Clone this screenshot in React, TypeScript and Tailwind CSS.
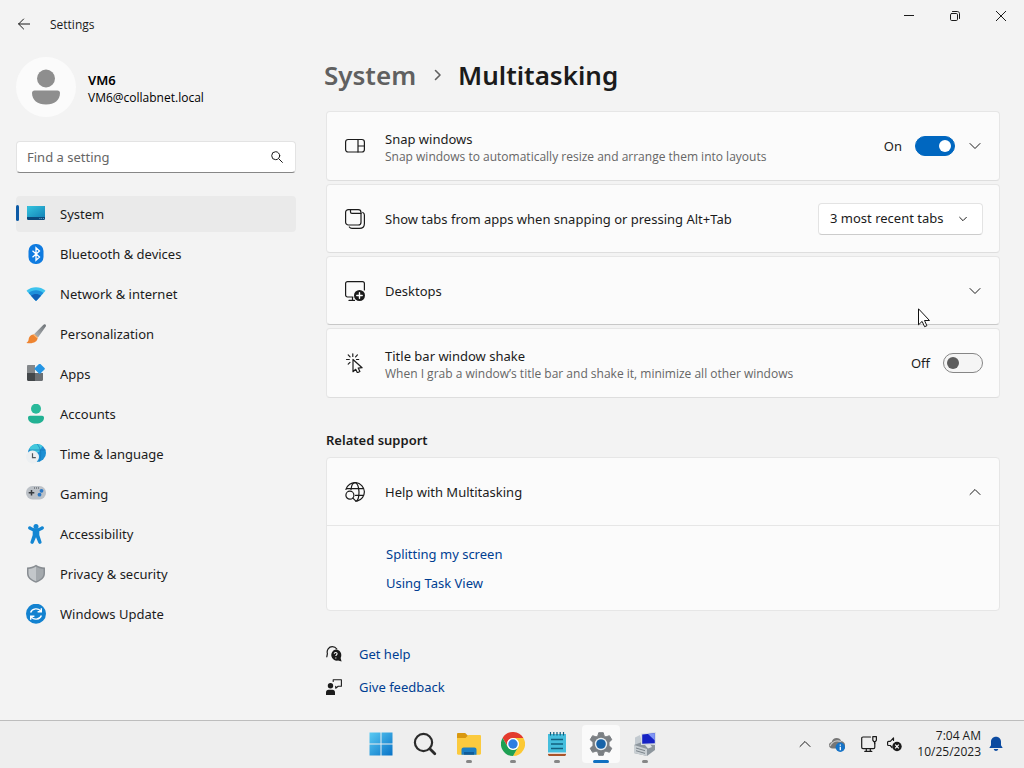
import { useState } from "react";
import type { ReactNode } from "react";

const stroke = {
  fill: "none",
  stroke: "#1b1b1b",
  strokeWidth: 1.2,
  strokeLinecap: "round" as const,
  strokeLinejoin: "round" as const,
};

function Chevron({ up = false, size = 12 }: { up?: boolean; size?: number }) {
  return (
    <svg width={size} height={size} viewBox="0 0 12 12" {...stroke} strokeWidth={12 / size}>
      <path d={up ? "M1 8.5l5-5 5 5" : "M1 3.5l5 5 5-5"} />
    </svg>
  );
}

/* ---------- sidebar icons ---------- */

function SystemIcon() {
  return (
    <svg width="20" height="20" viewBox="0 0 20 20">
      <defs>
        <linearGradient id="sys" x1="0" y1="0" x2="1" y2="1">
          <stop offset="0" stopColor="#34c5df" />
          <stop offset="1" stopColor="#1484b8" />
        </linearGradient>
      </defs>
      <rect x="1" y="2" width="18" height="14" rx="1.2" fill="#0b4a7d" />
      <path d="M2.2 2h15.6c.7 0 1.2.5 1.2 1.2V13H1V3.200C1 2.500 1.500 2 2.200 2z" fill="url(#sys)" />
      <path d="M13.500 14.500h.8M15.300 14.500h.8M17.100 14.500h.8" stroke="#8fd0ee" strokeWidth=".8" />
    </svg>
  );
}

function BluetoothIcon() {
  return (
    <svg width="20" height="20" viewBox="0 0 20 20">
      <rect x="2.5" width="15" height="20" rx="7" fill="#0f7be0" />
      <path d="M6.500 6.800l7 6.200-3.500 3.200V3.800l3.500 3.200-7 6.200" fill="none" stroke="#fff" strokeWidth="1.3" />
    </svg>
  );
}

function NetworkIcon() {
  return (
    <svg width="20" height="20" viewBox="0 0 20 20">
      <path d="M.5 6.800C6 2.200 14 2.200 19.500 6.800L10.800 16.300c-.5.500-1.100.5-1.600 0z" fill="#3cc3ee" />
      <path d="M2.600 9c4.200-3.600 10.600-3.600 14.800 0l-6.600 7.300c-.5.500-1.100.5-1.600 0z" fill="#1d8fdb" />
      <path d="M5 11.700c2.800-2.400 7.200-2.400 10 0l-4.200 4.600c-.5.500-1.100.5-1.600 0z" fill="#1160b7" />
    </svg>
  );
}

function PersonalizationIcon() {
  return (
    <svg width="20" height="20" viewBox="0 0 20 20">
      <defs>
        <linearGradient id="brush" x1="1" y1="0" x2="0" y2="1">
          <stop offset="0" stopColor="#6c7175" />
          <stop offset="1" stopColor="#b4b8bb" />
        </linearGradient>
      </defs>
      <path d="M19.400.5c.9.800.6 1.700 0 2.600L12 13.600 8 10.200 17.200 1c.7-.7 1.500-1 2.200-.5z" fill="url(#brush)" />
      <path d="M7.600 10.400c1.900.1 3.900 1.900 4 3.900-.4 3.700-4.800 5.900-11.200 4.600 2.300-1.200 2-2.500 2.500-4.800.6-2.300 2.500-3.700 4.700-3.700z" fill="#ee8430" />
      <path d="M7.900 10.100l4 3.500-.6 1-4.300-3.800z" fill="#f8bb7c" />
    </svg>
  );
}

function AppsIcon() {
  return (
    <svg width="20" height="20" viewBox="0 0 20 20">
      <path d="M1 2.200C1 1.500 1.500 1 2.200 1H9v8H1z" fill="#83878a" />
      <path d="M1 9h8v8H2.200C1.500 17 1 16.500 1 15.800z" fill="#43474a" />
      <path d="M9 9h8v6.800c0 .7-.5 1.200-1.200 1.200H9z" fill="#6b6f73" />
      <rect x="9.800" y=".9" width="7.800" height="7.800" rx="1" transform="rotate(45 13.7 4.8)" fill="#2495e4" />
    </svg>
  );
}

function AccountsIcon() {
  return (
    <svg width="20" height="20" viewBox="0 0 20 20">
      <circle cx="10" cy="4.700" r="5" fill="#29b99a" />
      <path d="M4 11.800h12c1.200 0 2 .8 2 1.900 0 3.900-3.400 5.800-8 5.800s-8-1.900-8-5.800c0-1.100.8-1.900 2-1.900z" fill="#22b193" />
    </svg>
  );
}

function TimeIcon() {
  return (
    <svg width="20" height="20" viewBox="0 0 20 20">
      <circle cx="11" cy="9" r="9" fill="#1d8fd3" />
      <path d="M3 5.200A9 9 0 0111 0c3 0 4.500 1 5.500 2L13 8 6 9z" fill="#43c8dc" />
      <path d="M11 0c4 4 5 11 2 18M3 6h16.500" stroke="#1173b5" strokeWidth=".6" fill="none" />
      <circle cx="6.500" cy="13" r="6.500" fill="#eceff1" />
      <path d="M6.500 9.300v4.400h3.300" stroke="#50565b" strokeWidth="1.2" fill="none" />
    </svg>
  );
}

function GamingIcon() {
  return (
    <svg width="20" height="20" viewBox="0 0 20 20">
      <rect y="2" width="20" height="13.500" rx="6.500" fill="#bcc1c7" />
      <path d="M5.500 6v5.600M2.700 8.800h5.600" stroke="#373b3f" strokeWidth="1.5" />
      <circle cx="15.500" cy="6.800" r="1.900" fill="#2b78c5" />
      <circle cx="13.500" cy="10.700" r="1.900" fill="#2b78c5" />
      <path d="M8 4h1M10 4h1M12 4h1" stroke="#44484c" />
    </svg>
  );
}

function AccessibilityIcon() {
  return (
    <svg width="20" height="20" viewBox="0 0 20 20" fill="#1386d3">
      <circle cx="10" cy="2.500" r="2.500" />
      <path d="M2.200 3.200c.5-1 1.500-1.300 2.400-.7 3.300 2.500 7.500 2.500 10.800 0 .9-.6 1.900-.3 2.400.7.400.9.100 1.700-.8 2.200L13.300 7.300v3.600l2.200 6.800c.3 1-.2 1.800-1.100 2.100-1 .3-1.800-.1-2.100-1L10 13.200l-2.300 5.600c-.3.900-1.100 1.300-2.100 1-.9-.3-1.400-1.100-1.100-2.100l2.200-6.800V7.300L3 5.400c-.9-.5-1.200-1.300-.8-2.200z" />
    </svg>
  );
}

function PrivacyIcon() {
  return (
    <svg width="20" height="20" viewBox="0 0 20 20">
      <path d="M10 .8c2.900 2 5.500 2.700 9 2.800v5.600c0 4.600-3.500 7.400-9 9.500C4.500 16.600 1 13.800 1 9.200V3.600C4.500 3.500 7.100 2.800 10 .8z" fill="#888d92" />
      <path d="M10 2.500c2.300 1.500 4.700 2.200 7.500 2.400v4.300c0 3.700-2.700 6.100-7.500 8z" fill="#a4a9ad" />
      <path d="M10 2.500C7.700 4 5.300 4.700 2.500 4.900v4.300c0 3.700 2.700 6.100 7.500 8z" fill="#c3c7ca" />
    </svg>
  );
}

function UpdateIcon() {
  return (
    <svg width="20" height="20" viewBox="0 0 20 20">
      <circle cx="10" cy="9.700" r="10" fill="#1382d0" />
      <path d="M4.600 8.500C6 4.300 12.500 3.400 15 7.500M15.300 4.200v3.600h-3.700M15.400 11.500C14 15.700 7.500 16.600 5 12.500M4.700 15.800v-3.600h3.700" fill="none" stroke="#fff" strokeWidth="1.4" />
    </svg>
  );
}

const navItems = [
  { label: "System", icon: <SystemIcon /> },
  { label: "Bluetooth & devices", icon: <BluetoothIcon /> },
  { label: "Network & internet", icon: <NetworkIcon /> },
  { label: "Personalization", icon: <PersonalizationIcon /> },
  { label: "Apps", icon: <AppsIcon /> },
  { label: "Accounts", icon: <AccountsIcon /> },
  { label: "Time & language", icon: <TimeIcon /> },
  { label: "Gaming", icon: <GamingIcon /> },
  { label: "Accessibility", icon: <AccessibilityIcon /> },
  { label: "Privacy & security", icon: <PrivacyIcon /> },
  { label: "Windows Update", icon: <UpdateIcon /> },
];

/* ---------- setting card icons ---------- */

function SnapIcon() {
  return (
    <svg width="20" height="20" viewBox="0 0 20 20" {...stroke}>
      <rect x=".6" y="3.500" width="18.800" height="12.500" rx="2.500" />
      <path d="M13 3.500v12.500M13 10h6.400" />
    </svg>
  );
}

function TabsIcon() {
  return (
    <svg width="20" height="20" viewBox="0 0 20 20" {...stroke}>
      <rect x=".6" y=".6" width="15.400" height="15.400" rx="2.800" />
      <path d="M5.500.6v2.400c0 .9.500 1.400 1.400 1.400H16M17.800 3.500c1 .5 1.600 1.400 1.600 2.500v8.400c0 3-2 5-5 5H7c-1.200 0-2.100-.5-2.700-1.400" />
    </svg>
  );
}

function DesktopsIcon() {
  return (
    <svg width="20" height="20" viewBox="0 0 20 20" {...stroke}>
      <path d="M8 16H2.600c-1.200 0-2-.8-2-2V2.600c0-1.200.8-2 2-2h14.800c1.200 0 2 .8 2 2V9M7.500 16v3.400M4 19.400h5.500" />
      <circle cx="14.500" cy="14.500" r="5.500" fill="#1b1b1b" stroke="none" />
      <path d="M14.500 11.800v5.400M11.800 14.500h5.400" stroke="#fff" strokeWidth="1.4" />
    </svg>
  );
}

function ShakeIcon() {
  return (
    <svg width="20" height="20" viewBox="0 0 20 20" {...stroke}>
      <path d="M8 6.500v12.200l2.700-2.400 1.700 3.400 2.500-1.200-1.700-3.400 3.900-.4z" />
      <path d="M7.800.8v2.600M1.500 6.500h2.800M3.200 1.900l1.900 1.900M12.400 1.900l-1.800 1.900M3.200 11.200L5 9.400M11.500 6.500h2.200" />
    </svg>
  );
}

function WebSearchIcon() {
  return (
    <svg width="20" height="20" viewBox="0 0 20 20" {...stroke}>
      <path d="M.9 7.500A9.400 9.400 0 1112 19.200M1.600 6.600h16.800M10.500 13.400h7.900" />
      <path d="M6 7.500C6.500 3.400 8 .6 10 .6s4 3.900 4 9.400-1.200 8.600-3 9.300" />
      <circle cx="4.900" cy="13.200" r="4" />
      <path d="M7.900 16.200l3 3" />
    </svg>
  );
}

function HelpIcon() {
  return (
    <svg width="16" height="16" viewBox="0 0 16 16">
      <path d="M.8 10.800l.6-3.200C.4 4 2.800.7 6.300.7c2 0 3.500.8 4.500 2.300" {...stroke} />
      <path d="M9.700 3.600a5.600 5.600 0 014.900 8.300l1 3.600-3.500-.9A5.600 5.600 0 119.700 3.600z" fill="#1b1b1b" />
      <path d="M8.200 7.700c.2-1.800 3-1.600 2.900.1 0 1-1.300 1.200-1.300 2.300M9.800 11.500v1" fill="none" stroke="#fff" strokeWidth="1.1" />
    </svg>
  );
}

function FeedbackIcon() {
  return (
    <svg width="16" height="16" viewBox="0 0 16 16">
      <path d="M7.200 2.500V.7h8.200v6.500h-3.200l-2.500 2V7.200" {...stroke} strokeWidth="1.1" />
      <circle cx="4.500" cy="6.800" r="2.700" fill="#1b1b1b" />
      <path d="M0 16v-2.800c0-1.500 1-2.500 2.500-2.500h4c1.500 0 2.500 1 2.500 2.500V16z" fill="#1b1b1b" />
    </svg>
  );
}

/* ---------- taskbar icons ---------- */

function StartIcon() {
  return (
    <svg width="24" height="24" viewBox="0 0 24 24">
      <defs>
        <linearGradient id="start" x1="0" y1="0" x2="24" y2="24" gradientUnits="userSpaceOnUse">
          <stop offset="0" stopColor="#5ccdf4" />
          <stop offset="1" stopColor="#0670c6" />
        </linearGradient>
      </defs>
      <path d="M.5.5h11v11H.5zM12.500.5h11v11h-11zM.5 12.500h11v11H.5zM12.500 12.500h11v11h-11z" fill="url(#start)" />
    </svg>
  );
}

function SearchTaskIcon() {
  return (
    <svg width="24" height="24" viewBox="0 0 24 24" fill="none" stroke="#2b2b2b">
      <circle cx="10.500" cy="10.500" r="8.600" strokeWidth="2.2" />
      <path d="M16.800 16.800l5 5" strokeWidth="2.800" strokeLinecap="round" />
    </svg>
  );
}

function ExplorerIcon() {
  return (
    <svg width="24" height="24" viewBox="0 0 24 24">
      <path d="M0 2.200C0 1.500.5 1 1.200 1h7l3 3v4H0z" fill="#d9980f" />
      <path d="M0 6h8.500l3-3h11.300c.7 0 1.200.5 1.200 1.200v17.300c0 .7-.5 1.200-1.200 1.200H1.200C.5 22.700 0 22.200 0 21.500z" fill="#fbca3e" />
      <path d="M4.500 22.700v-5c0-1.300.9-2.200 2.200-2.200h10.600c1.300 0 2.200.9 2.200 2.200v5z" fill="#1c7fc4" />
      <path d="M7 22.700v-2.700h10v2.700z" fill="#105c99" />
    </svg>
  );
}

function ChromeIcon() {
  return (
    <svg width="24" height="24" viewBox="0 0 24 24">
      <path d="M1.600 6a12 12 0 0120.800 0H12a6 6 0 00-5.200 9z" fill="#e33b2e" />
      <path d="M22.400 6A12 12 0 0112 24l5.200-9A6 6 0 0012 6z" fill="#fcc934" />
      <path d="M12 24A12 12 0 011.600 6l5.200 9a6 6 0 0010.400 0z" fill="#1fa053" />
      <circle cx="12" cy="12" r="5.900" fill="#fff" />
      <circle cx="12" cy="12" r="4.700" fill="#2f7de1" />
    </svg>
  );
}

function NotepadIcon() {
  return (
    <svg width="24" height="24" viewBox="0 0 24 24">
      <path d="M3 2h18v19H3z" fill="#45bedd" />
      <path d="M3 21.500h18v1c0 .8-.7 1.500-1.500 1.500h-15C3.700 24 3 23.300 3 22.500z" fill="#a9542a" />
      <path d="M3 20.500h18v1.200H3z" fill="#f4f4f4" />
      <path d="M6 7.500h12M6 12h12M6 16.500h12" stroke="#12607f" strokeWidth="1.6" />
      <path d="M5.500 0v3.500M8.800 0v3.500M12 0v3.500M15.200 0v3.500M18.500 0v3.500" stroke="#135a79" strokeWidth="1.2" />
    </svg>
  );
}

function GearIcon() {
  return (
    <svg width="24" height="24" viewBox="0 0 24 24">
      <path
        d="M9.700.7h4.600l.8 3.200 1.800 1 3.500-1.200 2.400 4-2.800 2.500v3.600l2.800 2.500-2.400 4-3.500-1.200-1.800 1-.8 3.200H9.700l-.8-3.200-1.800-1-3.500 1.200-2.400-4L4 13.800v-3.600L1.200 7.700l2.400-4 3.500 1.200 1.800-1z"
        fill="#7b7f83"
        stroke="#7b7f83"
        strokeLinejoin="round"
      />
      <circle cx="12" cy="12" r="6.200" fill="#e8eef2" />
      <circle cx="12" cy="12" r="4.800" fill="#1863a8" />
    </svg>
  );
}

function ComputerIcon() {
  return (
    <svg width="24" height="24" viewBox="0 0 24 24">
      <path d="M2 5.500l5-2.500 3 10-8 2z" fill="#c3cad0" />
      <path d="M1 13l8-3 13 3v5l-8 6L1 21z" fill="#8d969d" />
      <path d="M1 13l13 4v7L1 21z" fill="#c9cfd3" />
      <path d="M3 16l9 2.700M3 18.700l9 2.700" stroke="#7b848b" />
      <path d="M12 13l5-1 2 3-4 1.500z" fill="#dfe3e6" />
      <path d="M8 1.500L23 0v12.500L8 13z" fill="#d8dde3" />
      <path d="M9.200 2.600L21.800 1.300v10L9.200 11.800z" fill="#1622c4" />
      <path d="M15 2l6.800-.7v7.200z" fill="#7f95f5" />
    </svg>
  );
}

const taskbarApps = [
  { name: "Start", icon: <StartIcon />, running: false, active: false },
  { name: "Search", icon: <SearchTaskIcon />, running: false, active: false },
  { name: "File Explorer", icon: <ExplorerIcon />, running: true, active: false },
  { name: "Google Chrome", icon: <ChromeIcon />, running: true, active: false },
  { name: "Notepad", icon: <NotepadIcon />, running: true, active: false },
  { name: "Settings", icon: <GearIcon />, running: true, active: true },
  { name: "Remote Desktop", icon: <ComputerIcon />, running: true, active: false },
];

/* ---------- shared pieces ---------- */

type SettingCardProps = {
  icon: ReactNode;
  title: string;
  description?: string;
  hovered?: boolean;
  children?: ReactNode;
};

function SettingCard({ icon, title, description, hovered, children }: SettingCardProps) {
  return (
    <div
      className={`relative flex items-center rounded border border-[#e6e6e6] bg-[#fbfbfb] pl-[18px] pr-4 ${
        description ? "h-[70px]" : "h-[69px]"
      } ${hovered ? "border-b-[#c8c8c8]" : "border-b-[#dedede]"}`}
    >
      {icon}
      <div className={`ml-5 min-w-0 flex-1 ${description ? "pt-0.5" : ""}`}>
        <p className="text-[13px] leading-5">{title}</p>
        {description && (
          <p className="font-['Open_Sans',sans-serif] text-xs text-[#666666]">{description}</p>
        )}
      </div>
      {children}
    </div>
  );
}

function Toggle({ label, defaultOn }: { label: string; defaultOn: boolean }) {
  const [on, setOn] = useState(defaultOn);
  return (
    <label className="flex items-center gap-[13px] text-[13px]">
      <span className="pt-0.5">{on ? "On" : "Off"}</span>
      <input
        type="checkbox"
        role="switch"
        aria-label={label}
        checked={on}
        onChange={() => setOn(!on)}
        className="flex h-5 w-10 appearance-none items-center rounded-full border border-[#868686] bg-[#f5f5f5] px-[3px] before:size-3 before:rounded-full before:bg-[#5d5d5d] checked:justify-end checked:border-[#0067c0] checked:bg-[#0067c0] checked:before:bg-white"
      />
    </label>
  );
}

function Sidebar() {
  return (
    <aside className="w-[280px] shrink-0">
      <div className="flex items-center gap-3">
        <div className="flex size-[60px] items-center justify-center rounded-full bg-[#fbfbfb]">
          <svg width="28" height="36" viewBox="0 0 28 36" fill="#8e8e8e">
            <circle cx="14" cy="9.500" r="9" />
            <path d="M2.500 21.500h23c1.500 0 2.500 1 2.500 2.500 0 7-5.500 11.500-14 11.500S0 31 0 24c0-1.500 1-2.500 2.500-2.500z" />
          </svg>
        </div>
        <div className="pt-1 text-black">
          <p className="text-[13px] font-semibold leading-[18px]">VM6</p>
          <p className="font-['Open_Sans',sans-serif] text-xs leading-[18px]">VM6@collabnet.local</p>
        </div>
      </div>

      <div className="relative mt-6">
        <input
          type="text"
          aria-label="Find a setting"
          placeholder="Find a setting"
          className="h-8 w-full rounded border border-[#e3e3e3] border-b-[#868686] bg-white pl-[10px] pr-9 text-[13px] placeholder:text-[#666666]"
        />
        <svg className="absolute right-[13px] top-[10px]" width="12" height="12" viewBox="0 0 12 12" {...stroke} strokeWidth="1">
          <circle cx="4.700" cy="4.700" r="4" />
          <path d="M7.700 7.700l3.700 3.700" />
        </svg>
      </div>

      <nav className="mt-[23px] flex flex-col gap-1">
        {navItems.map((item, index) => (
          <a
            key={item.label}
            href="#"
            className={`relative flex h-9 items-center gap-[14px] rounded pl-[10px] text-[13px] ${
              index === 0 ? "bg-[#eaeaea]" : ""
            }`}
          >
            {index === 0 && (
              <span className="absolute left-0 top-[9px] h-4 w-[3px] rounded-full bg-[#0c5aa6]" />
            )}
            {item.icon}
            <span className="pt-px">{item.label}</span>
          </a>
        ))}
      </nav>
    </aside>
  );
}

function Taskbar() {
  return (
    <footer className="grid h-12 grid-cols-[1fr_auto_1fr] items-start border-t border-[#bdbdbd] bg-[#eeeeee] pl-0.5">
      <div />
      <div className="flex gap-[6px] pt-1">
        {taskbarApps.map((app) => (
          <button
            key={app.name}
            type="button"
            aria-label={app.name}
            className={`relative flex size-[38px] items-center justify-center rounded ${
              app.active ? "bg-[#fafafa]" : ""
            }`}
          >
            {app.icon}
            {app.running && (
              <span
                className={`absolute bottom-0 left-1/2 h-[3px] -translate-x-1/2 rounded-full ${
                  app.active ? "w-4 bg-[#1071c1]" : "w-[6px] bg-[#868686]"
                }`}
              />
            )}
          </button>
        ))}
      </div>
      <div className="flex h-[46px] items-center justify-end pr-[21px]">
        <button type="button" aria-label="Show hidden icons">
          <Chevron up />
        </button>
        <svg className="ml-[18px]" width="16" height="16" viewBox="0 0 16 16">
          <path d="M3.500 12.500C1.400 12.500 0 11 0 9.200 0 7.500 1.200 6.300 2.700 6 3.400 3.500 5.200 2 7.600 2c2.300 0 3.900 1.200 4.700 3.200 2 .1 3.700 1.700 3.700 3.800v3.500z" fill="#777" />
          <path d="M1 10c2-4.500 6.500-6 11-4.500" stroke="#c9c9c9" strokeWidth="1.3" fill="none" />
          <circle cx="11.300" cy="11.300" r="4.700" fill="#1673c7" />
          <path d="M11.300 8.400v1.300M11.300 10.700v3.500" stroke="#fff" strokeWidth="1.3" />
        </svg>
        <svg className="ml-4" width="16" height="16" viewBox="0 0 16 16" {...stroke}>
          <path d="M9.500 1H2C1.200 1 .7 1.500.7 2.300v9c0 .8.5 1.300 1.300 1.300h10.500c.8 0 1.300-.5 1.300-1.300V7M5.300 12.600v2.800M9.300 12.600v2.800M3.800 15.400h7" />
          <path d="M11.800.7h3.600v3.500l-1 1.500h-1.600l-1-1.500zM13.600 5.700v2" />
        </svg>
        <svg className="ml-[10px]" width="16" height="16" viewBox="0 0 16 16">
          <path d="M5 11.500L3.300 9.500h-1.800c-.5 0-.9-.4-.9-.9V6.300c0-.5.4-.9.9-.9h1.800L6.500 2v2.500" {...stroke} />
          <circle cx="10" cy="10.500" r="4.700" fill="#1b1b1b" />
          <path d="M8.200 8.700l3.600 3.600M11.800 8.700l-3.600 3.600" stroke="#fff" strokeWidth="1.2" />
        </svg>
        <div className="ml-[14px] text-right font-['Open_Sans',sans-serif] text-xs">
          <p>7:04 AM</p>
          <p>10/25/2023</p>
        </div>
        <svg className="ml-2" width="14" height="16" viewBox="0 0 14 16" fill="#0b4aa0">
          <path d="M7 .8c3 0 5 2.200 5 5v3.500l1.700 2.700H.3L2 9.300V5.800c0-2.800 2-5 5-5zM4.700 13h4.600c-.3 1.200-1.200 1.900-2.300 1.900S5 14.200 4.700 13z" />
        </svg>
      </div>
    </footer>
  );
}

export default function App() {
  return (
    <div className="flex min-h-screen flex-col bg-[#f3f3f3] font-['Noto_Sans',sans-serif] text-[#1b1b1b]">
      <header className="flex h-12 items-start justify-between">
        <div className="flex h-12 items-center gap-5 pl-[18px]">
          <button type="button" aria-label="Back">
            <svg width="12" height="12" viewBox="0 0 12 12" {...stroke} strokeWidth="1">
              <path d="M12 6H.6M5.600 1l-5 5 5 5" />
            </svg>
          </button>
          <h1 className="pt-0.5 font-['Open_Sans',sans-serif] text-xs">Settings</h1>
        </div>
        <div className="flex">
          <button type="button" aria-label="Minimize" className="flex h-8 w-[46px] items-center justify-center">
            <svg width="10" height="10" viewBox="0 0 10 10" {...stroke} strokeWidth="1">
              <path d="M0 4.500h10" />
            </svg>
          </button>
          <button type="button" aria-label="Restore" className="flex h-8 w-[46px] items-center justify-center">
            <svg width="10" height="10" viewBox="0 0 10 10" {...stroke} strokeWidth="1">
              <rect x=".5" y="2.500" width="7" height="7" rx="1.200" />
              <path d="M2.500.5h4.800c1.300 0 2.200.9 2.200 2.200v4.800" />
            </svg>
          </button>
          <button type="button" aria-label="Close" className="flex h-8 w-[46px] items-center justify-center">
            <svg width="10" height="10" viewBox="0 0 10 10" {...stroke} strokeWidth="1">
              <path d="M.2.2l9.600 9.600M9.800.2L.2 9.800" />
            </svg>
          </button>
        </div>
      </header>

      <div className="flex flex-1 gap-[30px] pl-4 pr-6 pt-[9px]">
        <Sidebar />

        <main className="min-w-0 flex-1">
          <h2 className="-ml-0.5 flex h-9 items-center text-[26px] font-semibold leading-9">
            <span className="text-[#606060]">System</span>
            <svg className="ml-[18px] mr-4" width="8" height="12" viewBox="0 0 8 12" {...stroke} stroke="#606060" strokeWidth="1.6">
              <path d="M1.500 1.500L6 6l-4.500 4.500" />
            </svg>
            Multitasking
          </h2>

          <div className="mt-[18px] flex flex-col gap-[3px]">
            <SettingCard
              icon={<SnapIcon />}
              title="Snap windows"
              description="Snap windows to automatically resize and arrange them into layouts"
            >
              <Toggle label="Snap windows" defaultOn />
              <button type="button" aria-label="Expand Snap windows" className="ml-[14px] mr-0.5">
                <Chevron />
              </button>
            </SettingCard>
            <SettingCard
              icon={<TabsIcon />}
              title="Show tabs from apps when snapping or pressing Alt+Tab"
            >
              <div className="relative">
                <select
                  aria-label="Show tabs from apps"
                  className="h-8 w-[165px] appearance-none rounded border border-[#e3e3e3] border-b-[#cccccc] bg-white pl-[11px] text-[13px]"
                >
                  <option>3 most recent tabs</option>
                  <option>5 most recent tabs</option>
                  <option>Don't show tabs</option>
                </select>
                <span className="pointer-events-none absolute right-4 top-3">
                  <Chevron size={8} />
                </span>
              </div>
            </SettingCard>
            <SettingCard icon={<DesktopsIcon />} title="Desktops" hovered>
              <button type="button" aria-label="Expand Desktops" className="mr-0.5">
                <Chevron />
              </button>
              <svg className="absolute right-[68px] top-[51px]" width="13" height="20" viewBox="0 0 13 20">
                <path d="M.5.8v16l3.600-3.400 2.500 5.300 2.300-1-2.400-5.200h5z" fill="#fff" stroke="#111" />
              </svg>
            </SettingCard>
            <SettingCard
              icon={<ShakeIcon />}
              title="Title bar window shake"
              description="When I grab a window’s title bar and shake it, minimize all other windows"
            >
              <Toggle label="Title bar window shake" defaultOn={false} />
            </SettingCard>
          </div>

          <h3 className="mt-8 text-[13px] font-semibold leading-5">Related support</h3>
          <section className="mt-[7px] rounded border border-[#e6e6e6] bg-[#fbfbfb]">
            <div className="flex h-[68px] items-center border-b border-[#e6e6e6] pl-[18px] pr-[18px]">
              <WebSearchIcon />
              <p className="ml-5 flex-1 pt-0.5 text-[13px]">Help with Multitasking</p>
              <button type="button" aria-label="Collapse Help with Multitasking">
                <Chevron up />
              </button>
            </div>
            <div className="flex flex-col items-start gap-[9px] pb-[17px] pl-[59px] pt-[18px] text-[13px] leading-5 text-[#003e92]">
              <a href="#">Splitting my screen</a>
              <a href="#">Using Task View</a>
            </div>
          </section>

          <div className="mt-[33px] flex flex-col items-start gap-[13px] pb-[23px] text-[13px] leading-5 text-[#003e92]">
            <a href="#" className="flex items-center gap-[17px]">
              <HelpIcon />
              Get help
            </a>
            <a href="#" className="flex items-center gap-[17px]">
              <FeedbackIcon />
              Give feedback
            </a>
          </div>
        </main>
      </div>

      <Taskbar />
    </div>
  );
}
